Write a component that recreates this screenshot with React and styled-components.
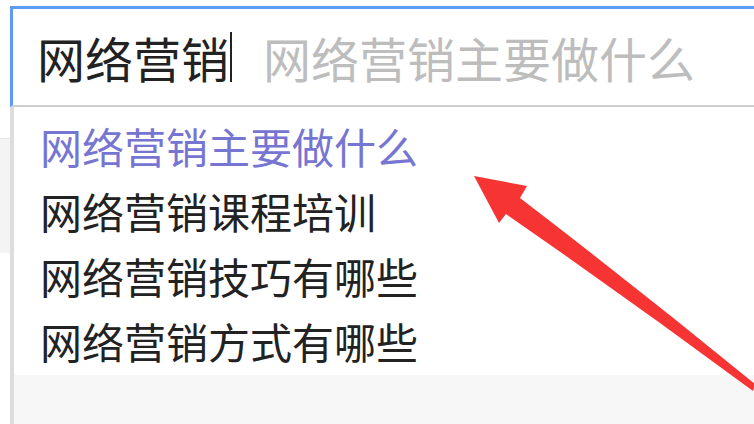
import styled, { createGlobalStyle } from 'styled-components';

const GlobalStyle = createGlobalStyle`
  html, body {
    margin: 0;
    padding: 0;
    background: #fff;
    overflow: hidden;
  }
  body {
    font-family: "Noto Sans CJK SC", "Noto Sans", sans-serif;
  }
`;

const Page = styled.div`
  position: relative;
  display: flex;
  height: 100vh;
  width: 100vw;
  overflow: hidden;
`;

const Backdrop = styled.div`
  width: 10px;
  flex-shrink: 0;
  display: flex;
  flex-direction: column;
  padding-top: 138px;
`;

const BackdropBand = styled.div`
  height: 114px;
  background: #f4f4f4;
  border-top: 1px solid #e4e4e4;
`;

const Widget = styled.div`
  flex: 1;
  display: flex;
  flex-direction: column;
  padding-top: 6px;
  min-width: 0;
`;

const SearchBox = styled.div`
  height: 96px;
  display: flex;
  align-items: center;
  padding-left: 24px;
  border-top: 3px solid #5d9cf2;
  border-left: 3px solid #5d9cf2;
  border-bottom: 2px solid #cfcfcf;
  white-space: nowrap;
  font-size: 48px;
  line-height: 1;
`;

const Typed = styled.span`
  color: #222;
`;

const Caret = styled.span`
  display: inline-block;
  width: 2px;
  height: 50px;
  margin-left: 1px;
  background: #222;
`;

const Hint = styled.span`
  margin-left: 31px;
  color: #bdbdbd;
`;

const Dropdown = styled.div`
  flex: 1;
  display: flex;
  flex-direction: column;
  border-left: 4px solid #dddddd;
`;

const List = styled.ul`
  list-style: none;
  margin: 0;
  padding: 6px 0 0;
`;

const Item = styled.li`
  height: 65px;
  display: flex;
  align-items: center;
  padding-left: 26px;
  font-size: 42px;
  line-height: 1;
  white-space: nowrap;
  color: ${({ $active }) => ($active ? '#7676d2' : '#222')};
`;

const Footer = styled.div`
  flex: 1;
  margin-top: 2px;
  background: #f7f7f7;
`;

const Overlay = styled.svg`
  position: absolute;
  left: 0;
  top: 0;
  width: 754px;
  height: 424px;
  pointer-events: none;
`;

const suggestions = [
  '网络营销主要做什么',
  '网络营销课程培训',
  '网络营销技巧有哪些',
  '网络营销方式有哪些',
];

function Arrow() {
  return (
    <Overlay viewBox="0 0 754 424">
      <path
        d="M474 176 L527 186 L520 198 Q640 290 755 384 L753 391 Q630 300 506 214 L499 223 Z"
        fill="#f73434"
      />
    </Overlay>
  );
}

export default function App() {
  return (
    <>
      <GlobalStyle />
      <Page>
        <Backdrop>
          <BackdropBand />
        </Backdrop>
        <Widget>
          <SearchBox>
            <Typed>网络营销</Typed>
            <Caret />
            <Hint>网络营销主要做什么</Hint>
          </SearchBox>
          <Dropdown>
            <List>
              {suggestions.map((text, i) => (
                <Item key={text} $active={i === 0}>{text}</Item>
              ))}
            </List>
            <Footer />
          </Dropdown>
        </Widget>
        <Arrow />
      </Page>
    </>
  );
}
